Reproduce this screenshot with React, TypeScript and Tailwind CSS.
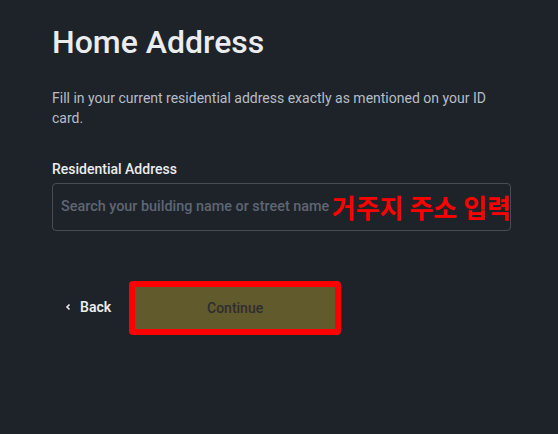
import React from "react";

export default function App() {
  return (
    <div
      className="w-[558px] h-[434px] bg-[#1e2329] overflow-hidden"
      style={{ fontFamily: "Roboto, 'Noto Sans', 'Noto Sans CJK KR', sans-serif" }}
    >
      <div className="ml-[52px] w-[459px] pt-[22px]">
        <h1 className="text-[32px] leading-[40px] font-medium text-[#eaecef]">Home Address</h1>
        <p className="mt-[26px] text-[14px] leading-[20px] text-[#b7bdc6]">
          Fill in your current residential address exactly as mentioned on your ID card.
        </p>
        <div className="mt-[31px] text-[14px] leading-[20px] font-medium text-[#eaecef]">
          Residential Address
        </div>
        <div className="relative mt-[4px] h-[48px] rounded-[4px] border border-[#474d57] flex items-center px-[8px]">
          <span className="text-[14.4px] font-medium text-[#5e6673]">Search your building name or street name</span>
          <span
            className="absolute right-[-1px] top-[9px] text-[26px] leading-[28px] font-bold text-[#ff0000]"
            style={{ fontFamily: "'Noto Sans CJK KR', sans-serif" }}
          >
            거주지 주소 입력
          </span>
        </div>
        <div className="mt-[48px] flex items-center">
          <button className="flex items-center gap-[8px] px-[12px] h-[40px] text-[14px] font-semibold text-[#eaecef]">
            <svg width="8" height="8" viewBox="0 0 8 8" fill="none">
              <path d="M5.5 1.5L3 4l2.5 2.5" stroke="#eaecef" strokeWidth="1.6" />
            </svg>
            Back
          </button>
          <div className="ml-[6px] mt-[2px] rounded-[4px] border-[6px] border-[#ff0000]">
            <button className="block w-[200px] h-[42px] bg-[#615a2d] text-[14px] font-medium text-[#2d2e30]">
              Continue
            </button>
          </div>
        </div>
      </div>
    </div>
  );
}
